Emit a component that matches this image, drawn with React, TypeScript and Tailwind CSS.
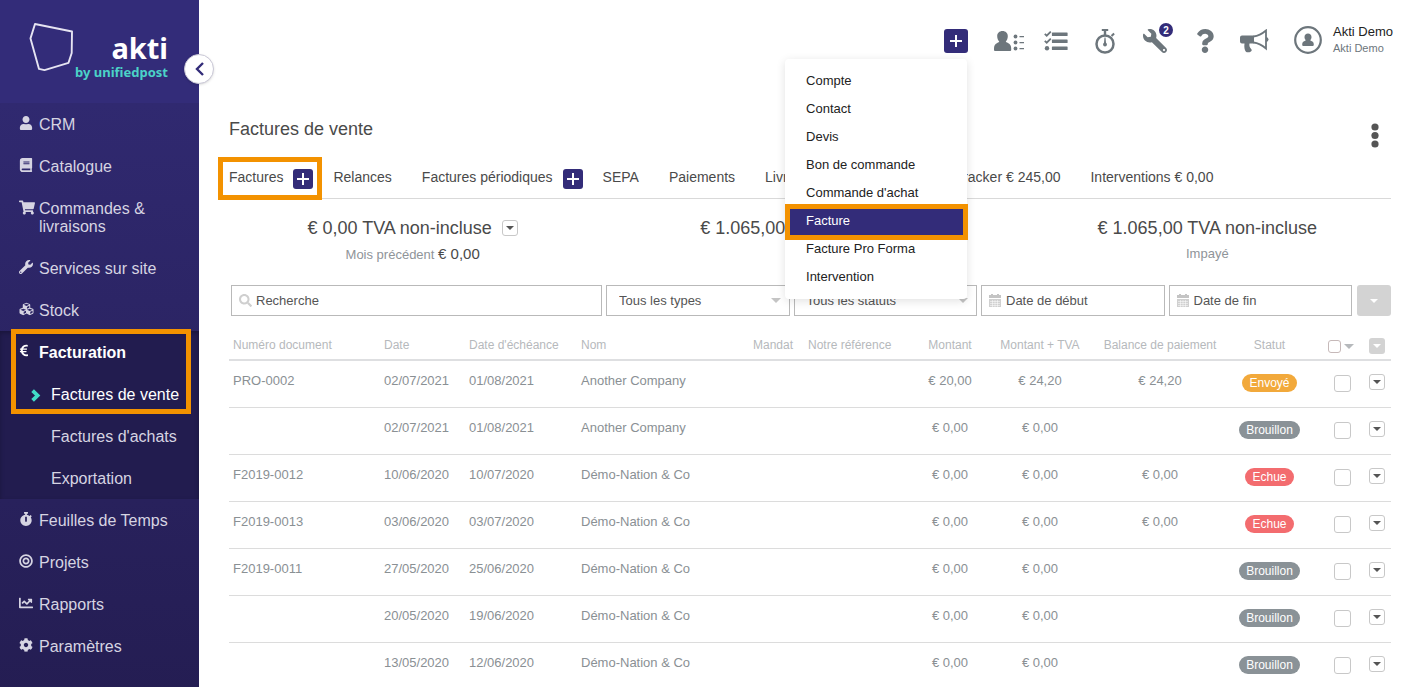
import type { ReactNode } from 'react';
import { clsx } from 'clsx';
import {
    FaBook,
    FaBullseye,
    FaChartLine,
    FaCog,
    FaCubes,
    FaEuroSign,
    FaQuestion,
    FaSearch,
    FaShoppingCart,
    FaStopwatch,
    FaUser,
    FaWrench,
} from 'react-icons/fa';

type Status = 'Envoyé' | 'Brouillon' | 'Echue';

interface Invoice {
    number: string;
    date: string;
    due: string;
    name: string;
    amount: string;
    amountVat: string;
    balance: string;
    status: Status;
}

const invoices: Invoice[] = [
    { number: 'PRO-0002', date: '02/07/2021', due: '01/08/2021', name: 'Another Company', amount: '€ 20,00', amountVat: '€ 24,20', balance: '€ 24,20', status: 'Envoyé' },
    { number: '', date: '02/07/2021', due: '01/08/2021', name: 'Another Company', amount: '€ 0,00', amountVat: '€ 0,00', balance: '', status: 'Brouillon' },
    { number: 'F2019-0012', date: '10/06/2020', due: '10/07/2020', name: 'Démo-Nation & Co', amount: '€ 0,00', amountVat: '€ 0,00', balance: '€ 0,00', status: 'Echue' },
    { number: 'F2019-0013', date: '03/06/2020', due: '03/07/2020', name: 'Démo-Nation & Co', amount: '€ 0,00', amountVat: '€ 0,00', balance: '€ 0,00', status: 'Echue' },
    { number: 'F2019-0011', date: '27/05/2020', due: '25/06/2020', name: 'Démo-Nation & Co', amount: '€ 0,00', amountVat: '€ 0,00', balance: '', status: 'Brouillon' },
    { number: '', date: '20/05/2020', due: '19/06/2020', name: 'Démo-Nation & Co', amount: '€ 0,00', amountVat: '€ 0,00', balance: '', status: 'Brouillon' },
    { number: '', date: '13/05/2020', due: '12/06/2020', name: 'Démo-Nation & Co', amount: '€ 0,00', amountVat: '€ 0,00', balance: '', status: 'Brouillon' },
];

const statusColors: Record<Status, string> = {
    'Envoyé': 'bg-[#f2a93b]',
    'Brouillon': 'bg-[#8a9297]',
    'Echue': 'bg-[#f36c6f]',
};

const createItems = [
    'Compte',
    'Contact',
    'Devis',
    'Bon de commande',
    "Commande d'achat",
    'Facture',
    'Facture Pro Forma',
    'Intervention',
];

const Caret = ({ className }: { className?: string }) => (
    <svg viewBox="0 0 8 4" className={clsx('fill-current', className ?? 'h-1 w-2')}>
        <path d="M0 0h8L4 4z" />
    </svg>
);

const Plus = ({ className }: { className?: string }) => (
    <svg viewBox="0 0 12 12" className={clsx('fill-white', className)}>
        <path d="M5 0h2v5h5v2H7v5H5V7H0V5h5z" />
    </svg>
);

const Calendar = () => (
    <svg viewBox="0 0 12 13" className="h-[13px] w-3 shrink-0">
        <path d="M0 1h2V0h2v1h4V0h2v1h2v3H0z" fill="#c4c4c4" />
        <path d="M0 5h12v8H0z" fill="#d0d0d0" />
        <path d="M1 7.5h10M1 9.5h10M1 11.5h10M3.5 6v7M6 6v7M8.5 6v7" stroke="#fff" strokeWidth=".5" />
    </svg>
);

const CaretButton = ({ label }: { label: string }) => (
    <button
        type="button"
        aria-label={label}
        className="flex h-4 w-4 items-center justify-center rounded-[3px] border border-[#c8c8c8] bg-white text-[#555]"
    >
        <Caret />
    </button>
);

const NavItem = ({ icon, children, active }: { icon: ReactNode; children: ReactNode; active?: boolean }) => (
    <a
        href="#"
        className={clsx(
            'flex pt-[13px] pr-4 pb-[11px] pl-[19px] text-base leading-[18px]',
            active ? 'font-bold text-white' : 'text-[#d6d4e2]',
        )}
    >
        <span className="w-5 shrink-0 text-sm">{icon}</span>
        <span>{children}</span>
    </a>
);

const SubItem = ({ children, active }: { children: ReactNode; active?: boolean }) => (
    <a
        href="#"
        className={clsx(
            'flex items-center pt-[13px] pb-[11px] pl-[31px] text-base leading-[18px] whitespace-nowrap',
            active ? 'text-white' : 'text-[#d6d4e2]',
        )}
    >
        <span className="w-5 shrink-0">
            {active && (
                <svg viewBox="0 0 10 13" className="h-[13px] w-[10px]">
                    <path d="M1.600 1.600l5 4.900-5 4.900" fill="none" stroke="#41dcc8" strokeWidth="3.800" />
                </svg>
            )}
        </span>
        {children}
    </a>
);

const Sidebar = () => (
    <aside className="relative z-10 w-[199px] shrink-0 bg-[#332c79]">
        <div className="relative h-[103px]">
            <svg viewBox="0 0 46 50" className="absolute top-[22px] left-[29px] h-[50px] w-[46px]">
                <path d="M6 2l37 7.500-.3 21.500-3.200 9.800-24 7.300-5.500-1.200-8.500-30.500z" fill="none" stroke="#e6e4f2" strokeWidth="1.900" strokeLinejoin="round" />
            </svg>
            <div className="flex flex-col items-end pt-8 pr-[31px] font-['Noto_Sans',sans-serif] font-bold">
                <span className="text-[29px] leading-8 text-white">akti</span>
                <span className="text-[13px] leading-4 text-[#4bd3c8]">by unifiedpost</span>
            </div>
        </div>
        <button
            type="button"
            aria-label="Réduire le menu"
            className="absolute top-[54px] -right-[15px] flex h-[30px] w-[30px] items-center justify-center rounded-full border border-[#c9c7d6] bg-white shadow"
        >
            <svg viewBox="0 0 9 14" className="h-[14px] w-[9px]">
                <path d="M8 1L2 7l6 6" fill="none" stroke="#332c79" strokeWidth="2.400" />
            </svg>
        </button>

        <nav className="h-full bg-linear-to-b from-[#302970] to-[#241d52] to-[600px]">
            <NavItem icon={<FaUser />}>CRM</NavItem>
            <NavItem icon={<FaBook />}>Catalogue</NavItem>
            <NavItem icon={<FaShoppingCart className="h-[15px] w-4" />}>Commandes &amp; livraisons</NavItem>
            <NavItem icon={<FaWrench />}>Services sur site</NavItem>
            <NavItem icon={<FaCubes className="h-[14px] w-[15px]" />}>Stock</NavItem>
            <div className="relative bg-[#221c4f] shadow-[inset_0_2px_4px_rgba(0,0,0,0.25)]">
                <NavItem icon={<FaEuroSign className="h-[13px] w-[10px]" />} active>Facturation</NavItem>
                <SubItem active>Factures de vente</SubItem>
                <SubItem>Factures d'achats</SubItem>
                <SubItem>Exportation</SubItem>
                <div className="pointer-events-none absolute -top-0.5 right-2 left-[11px] h-[85px] border-[5px] border-[#f39200]" />
            </div>
            <NavItem icon={<FaStopwatch />}>Feuilles de Temps</NavItem>
            <NavItem icon={<FaBullseye />}>Projets</NavItem>
            <NavItem icon={<FaChartLine />}>Rapports</NavItem>
            <NavItem icon={<FaCog />}>Paramètres</NavItem>
        </nav>
    </aside>
);

const CreateMenu = () => (
    <div className="relative">
        <button
            type="button"
            aria-label="Créer"
            className="flex h-6 w-6 items-center justify-center rounded-[3px] bg-[#332c79]"
        >
            <Plus className="h-3 w-3" />
        </button>
        <ul className="absolute top-[30px] right-px z-20 w-[182px] rounded bg-white py-2 text-[13px] text-[#222] shadow-[0_2px_10px_rgba(0,0,0,0.12)]">
            {createItems.map((item) => {
                const selected = item === 'Facture';
                return (
                    <li key={item} className="relative">
                        {selected && (
                            <div className="absolute -right-px left-0 -top-[3px] -bottom-[5px] border-[5px] border-[#f39200] bg-[#332c79]" />
                        )}
                        <a href="#" className={clsx('relative block px-[21px] leading-7', selected && 'text-white')}>
                            {item}
                        </a>
                    </li>
                );
            })}
        </ul>
    </div>
);

const TopBar = () => (
    <header className="flex h-[58px] items-center justify-end pt-6 pr-2 text-[#6d767c]">
        <CreateMenu />
        <a href="#" aria-label="Contacts" className="ml-[26px]">
            <svg viewBox="0 0 30 20" className="h-5 w-[30px] fill-current">
                <path d="M8.500 0c3.200 0 5.300 2.200 5.300 5.200 0 2.300-.8 4-2 5.300.2.600.9 1 2.200 1.400 2.400.9 3.200 3 3.200 5.600V19q0 1-1 1H1q-1 0-1-1v-1.500c0-2.600.8-4.700 3.200-5.600 1.200-.4 1.900-.8 2-1.400-1.200-1.300-2-3-2-5.300 0-3 2.100-5.200 5.300-5.200z" />
                <circle cx="21.500" cy="5.500" r="1.900" />
                <circle cx="21.500" cy="11.500" r="1.900" />
                <circle cx="21.500" cy="17.500" r="1.900" />
                <path d="M25.500 5H30v1.200h-4.500zM25.500 11H30v1.200h-4.500zM25.500 17H30v1.200h-4.500z" />
            </svg>
        </a>
        <a href="#" aria-label="Tâches" className="ml-5">
            <svg viewBox="0 0 24 20" className="h-5 w-6 fill-current">
                <path d="M8.500 1.500H23q.6 0 .6.600v2.300q0 .6-.6.600H8.500q-.6 0-.6-.6V2.100q0-.6.600-.6zM8.500 8.500H23q.6 0 .6.600v2.300q0 .6-.6.600H8.500q-.6 0-.6-.6V9.100q0-.6.600-.6zM8.500 15.500H23q.6 0 .6.600v2.300q0 .6-.6.600H8.500q-.6 0-.6-.6v-2.300q0-.6.600-.6z" />
                <circle cx="3" cy="17.300" r="2.200" />
                <path d="M.8 2.800l1.900 1.900L6.800.6M.8 9.800l1.900 1.900L6.800 7.600" fill="none" stroke="currentColor" strokeWidth="1.800" />
            </svg>
        </a>
        <a href="#" aria-label="Chronomètre" className="ml-[27px]">
            <svg viewBox="0 0 21 25" className="h-[25px] w-[21px] fill-current">
                <circle cx="10" cy="15" r="8.500" fill="none" stroke="currentColor" strokeWidth="2.500" />
                <path d="M6.800 0h6.400v2h-2v4h-2.400V2h-2zM15.800 6.300l2.600-2.500 1.400 1.500-2.500 2.500z" />
                <path d="M9.500 8.500h1l.6 6.500h-2.200z" />
                <circle cx="10" cy="15.500" r="1.900" />
            </svg>
        </a>
        <a href="#" aria-label="Paramétrage" className="relative ml-[27px]">
            <FaWrench className="h-6 w-6 -scale-x-100" />
            <span className="absolute -top-1.5 -right-1.5 flex h-[14px] w-[14px] items-center justify-center rounded-full bg-[#332c79] text-[10px] font-bold text-white">
                2
            </span>
        </a>
        <a href="#" aria-label="Aide" className="ml-[27px]">
            <FaQuestion className="h-6 w-[22px]" />
        </a>
        <a href="#" aria-label="Annonces" className="ml-6">
            <svg viewBox="0 0 29 24" className="h-6 w-[29px] fill-current">
                <path d="M2 6.500h12v8H9.500c-.6 2.200.4 4.200 2 6 .5.700.2 1.300-.6 2-1.500 1.100-4 1.100-5 .2-1.400-1.800-1.900-4.800-1.400-8.200H2q-2 0-2-2v-4q0-2 2-2z" />
                <path d="M13.500 7.500C18 7 22.500 4.500 26 1.500v18c-3.500-3-8-5.500-12.500-6" fill="none" stroke="currentColor" strokeWidth="1.800" />
                <path d="M26 8q2.500.2 2.500 2.500T26 13z" />
            </svg>
        </a>
        <a href="#" className="mb-0.5 ml-[25px] flex items-center gap-[11px]">
            <svg viewBox="0 0 28 28" className="h-7 w-7 fill-current">
                <circle cx="14" cy="14" r="12.800" fill="none" stroke="currentColor" strokeWidth="2.200" />
                <path d="M14 7.500c2.100 0 3.500 1.500 3.500 3.500 0 1.400-.5 2.300-1.200 3 .1.700.8 1 1.600 1.300 1.400.7 1.900 1.600 1.900 3.200 0 .9-.3 1.500-1.200 1.500H9.400c-.9 0-1.200-.6-1.200-1.500 0-1.600.5-2.500 1.900-3.200.8-.3 1.500-.6 1.600-1.300-.7-.7-1.200-1.600-1.200-3 0-2 1.400-3.500 3.500-3.500z" />
            </svg>
            <span className="flex flex-col">
                <span className="text-[13px] leading-4 text-[#222]">Akti Demo</span>
                <span className="text-[11px] leading-4">Akti Demo</span>
            </span>
        </a>
    </header>
);

const AddButton = ({ label }: { label: string }) => (
    <button
        type="button"
        aria-label={label}
        className="mt-1 flex h-5 w-5 items-center justify-center rounded-[3px] bg-[#332c79]"
    >
        <Plus className="h-3 w-3" />
    </button>
);

const Tabs = () => (
    <nav className="flex h-[42px] items-center gap-[30px] border-b border-[#d9d9d9] pb-0.5 text-sm whitespace-nowrap">
        <div className="relative -mr-2.5 flex items-center gap-2.5">
            <a href="#">Factures</a>
            <AddButton label="Nouvelle facture" />
            <div className="pointer-events-none absolute -top-2 -right-[9px] -left-[11px] h-[43px] border-[5px] border-[#f39200]" />
        </div>
        <a href="#">Relances</a>
        <div className="-mr-2.5 flex items-center gap-2.5">
            <a href="#">Factures périodiques</a>
            <AddButton label="Nouvelle facture périodique" />
        </div>
        <a href="#">SEPA</a>
        <a href="#">Paiements</a>
        <a href="#" className="pr-5">Livraisons € 0,00</a>
        <a href="#">Time Tracker € 245,00</a>
        <a href="#">Interventions € 0,00</a>
    </nav>
);

const Summary = () => (
    <section className="-mx-[15px] grid grid-cols-3 pt-[15px] text-center text-[13px] leading-6 text-[#8f9499]">
        <div>
            <div className="flex items-center justify-center gap-2.5 text-lg leading-7 text-[#4a4a4a]">
                € 0,00 TVA non-incluse
                <CaretButton label="Changer la période" />
            </div>
            <p>
                Mois précédent <span className="text-[15px] text-[#4a4a4a]">€ 0,00</span>
            </p>
        </div>
        <div>
            <div className="text-lg leading-7 text-[#4a4a4a]">€ 1.065,00 TVA non-incluse</div>
        </div>
        <div>
            <div className="text-lg leading-7 text-[#4a4a4a]">€ 1.065,00 TVA non-incluse</div>
            <p>Impayé</p>
        </div>
    </section>
);

const fieldBox = 'flex h-[31px] items-center border border-[#b9b9b9] bg-white';
const fieldInput = 'w-full min-w-0 bg-transparent text-[13px] text-[#555] outline-none placeholder:text-[#555]';

const SelectField = ({ label }: { label: string }) => (
    <div className={clsx(fieldBox, 'relative')}>
        <select aria-label={label} className={clsx(fieldInput, 'h-full appearance-none pl-3')}>
            <option>{label}</option>
        </select>
        <Caret className="pointer-events-none absolute right-2 h-[5px] w-[10px] text-[#c4c4c4]" />
    </div>
);

const DateField = ({ label }: { label: string }) => (
    <label className={clsx(fieldBox, 'gap-[5px] pl-[7px]')}>
        <Calendar />
        <input type="text" aria-label={label} placeholder={label} className={fieldInput} />
    </label>
);

const Filters = () => (
    <form className="mt-[18px] flex gap-[5px] pl-0.5">
        <div className="grid flex-1 grid-cols-6 gap-1">
            <label className={clsx(fieldBox, 'col-span-2 gap-1 pl-[7px]')}>
                <FaSearch className="h-[13px] w-[13px] shrink-0 text-[#cfcfcf]" />
                <input type="text" aria-label="Recherche" placeholder="Recherche" className={fieldInput} />
            </label>
            <SelectField label="Tous les types" />
            <SelectField label="Tous les statuts" />
            <DateField label="Date de début" />
            <DateField label="Date de fin" />
        </div>
        <button
            type="button"
            aria-label="Plus de filtres"
            className="flex h-[31px] w-[34px] items-center justify-center rounded-[3px] bg-[#d3d3d3] text-white"
        >
            <Caret />
        </button>
    </form>
);

const InvoiceTable = () => (
    <table className="w-full table-fixed border-separate border-spacing-0 text-[13px] whitespace-nowrap text-[#8a9094]">
        <colgroup>
            <col className="w-[151px]" />
            <col className="w-[85px]" />
            <col className="w-[112px]" />
            <col />
            <col className="w-[55px]" />
            <col className="w-[119px]" />
            <col className="w-[54px]" />
            <col className="w-[126px]" />
            <col className="w-[114px]" />
            <col className="w-[105px]" />
            <col className="w-[41px]" />
            <col className="w-[28px]" />
        </colgroup>
        <thead>
            <tr className="h-[45px] text-left text-xs leading-[18px] text-[#b6b9bc] [&>th]:border-b-2 [&>th]:border-[#dedfe1] [&>th]:px-1 [&>th]:pb-[5px] [&>th]:align-bottom [&>th]:font-normal">
                <th>Numéro document</th>
                <th>Date</th>
                <th>Date d'échéance</th>
                <th>Nom</th>
                <th>Mandat</th>
                <th>Notre référence</th>
                <th className="text-center">Montant</th>
                <th className="text-center">Montant + TVA</th>
                <th className="px-0! text-center">Balance de paiement</th>
                <th className="text-center">Statut</th>
                <th>
                    <div className="flex h-4 items-center gap-[3px] pl-0.5">
                        <input
                            type="checkbox"
                            aria-label="Tout sélectionner"
                            className="h-[13px] w-[13px] shrink-0 appearance-none rounded-[3px] border border-[#c6b9b9]"
                        />
                        <Caret className="h-[5px] w-[10px] shrink-0 text-[#b6b9bc]" />
                    </div>
                </th>
                <th>
                    <button
                        type="button"
                        aria-label="Actions groupées"
                        className="mx-auto flex h-4 w-4 items-center justify-center rounded-[3px] bg-[#d3d3d3] text-white"
                    >
                        <Caret />
                    </button>
                </th>
            </tr>
        </thead>
        <tbody>
            {invoices.map((invoice, index) => (
                <tr
                    key={index}
                    className="h-[47px] leading-5 [&>td]:border-b [&>td]:border-[#dcdcdc] [&>td]:px-1 [&>td]:pt-2.5 [&>td]:align-top"
                >
                    <td>{invoice.number}</td>
                    <td>{invoice.date}</td>
                    <td>{invoice.due}</td>
                    <td>{invoice.name}</td>
                    <td />
                    <td />
                    <td className="text-center">{invoice.amount}</td>
                    <td className="text-center">{invoice.amountVat}</td>
                    <td className="text-center">{invoice.balance}</td>
                    <td>
                        <div className="flex justify-center pt-[3px]">
                            <span className={clsx('rounded-full px-[7px] text-xs leading-[18px] text-white', statusColors[invoice.status])}>
                                {invoice.status}
                            </span>
                        </div>
                    </td>
                    <td>
                        <input
                            type="checkbox"
                            aria-label="Sélectionner la facture"
                            className="mx-auto mt-1 block h-[17px] w-[17px] appearance-none rounded-[3px] border border-[#c8c8c8]"
                        />
                    </td>
                    <td>
                        <div className="flex justify-center pt-[3px]">
                            <CaretButton label="Actions" />
                        </div>
                    </td>
                </tr>
            ))}
        </tbody>
    </table>
);

export default function App() {
    return (
        <div className="flex h-screen overflow-hidden bg-white font-['Liberation_Sans',Arial,sans-serif] text-[#4a4a4a]">
            <Sidebar />
            <div className="min-w-0 flex-1">
                <TopBar />
                <main className="pr-2.5 pl-[30px]">
                    <div className="flex items-start justify-between pt-[57px] pb-[9px]">
                        <h1 className="text-lg leading-7">Factures de vente</h1>
                        <button type="button" aria-label="Plus d'options" className="mt-2 mr-3">
                            <svg viewBox="0 0 8 25" className="h-[25px] w-2 fill-[#555]">
                                <circle cx="4" cy="4" r="3.600" />
                                <circle cx="4" cy="12.500" r="3.600" />
                                <circle cx="4" cy="21" r="3.600" />
                            </svg>
                        </button>
                    </div>
                    <Tabs />
                    <Summary />
                    <Filters />
                    <InvoiceTable />
                </main>
            </div>
        </div>
    );
}
